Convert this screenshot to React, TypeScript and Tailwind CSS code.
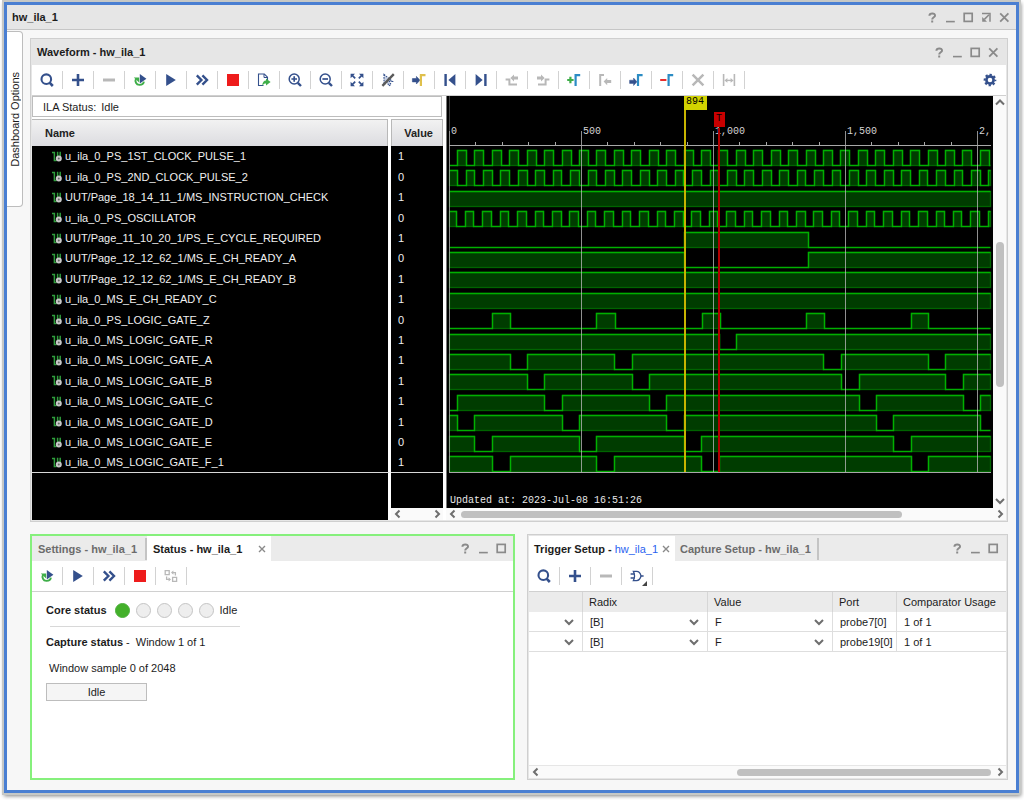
import React from "react";

const NAVY = "#34508c";
const GREY = "#b8b8b8";
const GREEN = "#3fae49";
const EDGE = "#2b8cc4";

type IconName =
  | "search" | "plus" | "minus" | "rerun" | "play" | "forward" | "stop" | "export"
  | "zoomIn" | "zoomOut" | "fit" | "noCursor" | "toCursor" | "first" | "last"
  | "prevEdge" | "nextEdge" | "addMarker" | "prevMarker" | "nextMarker" | "removeMarker"
  | "clear" | "measure" | "gear" | "gate" | "swap";

const edge = (x: number, color: string) => (
  <path d={`M${x} 14V3.2H${x + 4.6}`} fill="none" stroke={color} strokeWidth="2.2" />
);

const glass = (
  <>
    <circle cx="7.2" cy="7" r="5" fill="none" stroke={NAVY} strokeWidth="1.5" />
    <path d="M10.8 10.8L14 14" stroke={NAVY} strokeWidth="2.4" />
  </>
);

const icons: Record<IconName, React.ReactNode> = {
  search: (
    <>
      <circle cx="7.3" cy="7.2" r="4.8" fill="none" stroke={NAVY} strokeWidth="2.1" />
      <path d="M10.6 10.6L13.8 14" stroke={NAVY} strokeWidth="2.6" />
    </>
  ),
  plus: <path d="M8 2v12M2 8h12" stroke={NAVY} strokeWidth="2.6" />,
  minus: <path d="M2 8h12" stroke={GREY} strokeWidth="3" />,
  rerun: (
    <>
      <path d="M4 6.6C2.6 9.4 4.2 12.8 7.3 12.9C9.8 13 11.6 11.6 11.9 9.6" fill="none" stroke={GREEN} strokeWidth="1.9" />
      <path d="M1.8 5.4h5.4v5z" fill={GREEN} />
      <path d="M7.8 2L14.4 6.8L7.8 11.6z" fill={NAVY} />
    </>
  ),
  play: <path d="M3.2 2L12.8 8L3.2 14z" fill={NAVY} />,
  forward: <path d="M2.8 3.4L7.4 8L2.8 12.6M8.4 3.4L13 8L8.4 12.6" fill="none" stroke={NAVY} strokeWidth="2.4" />,
  stop: <rect x="2" y="2" width="12" height="12" fill="#ee1c1c" />,
  export: (
    <>
      <path d="M11.5 8V5.2L8.3 2H2.5v11.5h5" fill="none" stroke={NAVY} strokeWidth="1.1" />
      <path d="M8 2v3.5h3.5" fill="none" stroke={NAVY} strokeWidth="1" />
      <path d="M6.2 13.8C6.6 10.2 8 8.6 10 8.6V6.4L14.6 10L10 13.4V11.4C8.4 11.4 7.4 12 6.2 13.8z" fill={GREEN} />
    </>
  ),
  zoomIn: (
    <>
      {glass}
      <path d="M7.2 4.2v5.6M4.4 7H10" stroke={NAVY} strokeWidth="1.7" />
    </>
  ),
  zoomOut: (
    <>
      {glass}
      <path d="M4.4 7H10" stroke={NAVY} strokeWidth="1.7" />
    </>
  ),
  fit: (
    <g fill={NAVY} stroke={NAVY}>
      <path stroke="none" d="M1.6 1.8h4.4L1.6 6.2zM14.4 1.8H10L14.4 6.2zM1.6 14.2h4.4L1.6 9.8zM14.4 14.2H10L14.4 9.8z" />
      <path strokeWidth="1.7" d="M3 3.2L6.2 6.4M13 3.2L9.8 6.4M3 12.8L6.2 9.6M13 12.8L9.8 9.6" />
    </g>
  ),
  noCursor: (
    <>
      <path d="M4 2.5V12.5L7 10L9 13.8L11 12.6L9.4 9.4H12.4z" fill="#c9d2e4" stroke={NAVY} strokeWidth="1.1" strokeDasharray="1.6 1" />
      <path d="M2.4 13.8L13.8 2.2" stroke="#5a5a5a" strokeWidth="2.4" />
    </>
  ),
  toCursor: (
    <>
      <path d="M1.4 6.6h4V4.4L9 8.2L5.4 12V9.9h-4z" fill={NAVY} stroke={NAVY} strokeWidth="0.6" />
      {edge(9.9, "#dfc04c")}
    </>
  ),
  first: (
    <>
      <rect x="2.4" y="2" width="2.4" height="12" fill={NAVY} />
      <path d="M13.4 2v12L6.4 8z" fill={NAVY} />
    </>
  ),
  last: (
    <>
      <rect x="11.2" y="2" width="2.4" height="12" fill={NAVY} />
      <path d="M2.6 2v12L9.6 8z" fill={NAVY} />
    </>
  ),
  prevEdge: (
    <>
      <path d="M1.6 7.4h3.8v5.2h7.6" fill="none" stroke={GREY} strokeWidth="2" />
      <path d="M6.4 6L10 2.4V4.5h4V7.5h-4v2.1z" fill={GREY} />
    </>
  ),
  nextEdge: (
    <>
      <path d="M14.4 7.4h-3.8v5.2H3" fill="none" stroke={GREY} strokeWidth="2" />
      <path d="M9.6 6L6 2.4V4.5H2V7.5h4v2.1z" fill={GREY} />
    </>
  ),
  addMarker: (
    <>
      <path d="M4.4 4.8v6.4M1.2 8h6.4" stroke={GREEN} strokeWidth="2.2" />
      {edge(9.6, EDGE)}
    </>
  ),
  prevMarker: (
    <>
      <path d="M3.2 14V3H7" fill="none" stroke={GREY} strokeWidth="2" />
      <path d="M14.2 8.1h-4V6L6.6 9.6L10.2 13.2v-2.1h4z" fill={GREY} />
    </>
  ),
  nextMarker: (
    <>
      <path d="M1.6 8.2h4V6.1L9 9.8L5.6 13.5V11.4h-4z" fill={NAVY} stroke={NAVY} strokeWidth="0.5" />
      {edge(10, EDGE)}
    </>
  ),
  removeMarker: (
    <>
      <path d="M1.2 8h6.2" stroke="#e82c2c" strokeWidth="2" />
      {edge(9.6, EDGE)}
    </>
  ),
  clear: <path d="M2.6 2.6L13.4 13.4M13.4 2.6L2.6 13.4" stroke={GREY} strokeWidth="2.5" />,
  measure: (
    <>
      <path d="M2.6 2v12M13.4 2v12" stroke={GREY} strokeWidth="1.6" />
      <path d="M5 8.4h6" stroke={GREY} strokeWidth="1.4" />
      <path d="M3.4 8.4L6.4 6v4.8zM12.6 8.4L9.6 6v4.8z" fill={GREY} />
    </>
  ),
  gear: (
    <>
      <circle cx="8" cy="8" r="3.6" fill="none" stroke={NAVY} strokeWidth="2.6" />
      <circle cx="8" cy="8" r="5.4" fill="none" stroke={NAVY} strokeWidth="1.9" strokeDasharray="2.3 1.94" strokeDashoffset="1.15" />
    </>
  ),
  gate: (
    <>
      <path d="M4.4 3.4H7.6C10 3.4 11.4 5.4 12 8C11.4 10.6 10 12.6 7.6 12.6H4.4C5.8 9.8 5.8 6.2 4.4 3.4z" fill="none" stroke={NAVY} strokeWidth="1.3" />
      <path d="M1.6 6h4M1.6 10h4M12 8h2.6" stroke={NAVY} strokeWidth="1.3" />
      <path d="M18 13v5h-5z" fill="#444" />
    </>
  ),
  swap: (
    <>
      <path d="M2.2 2.6h4v4h-4zM9.6 9.4h4v4h-4z" fill="none" stroke={GREY} strokeWidth="1.3" />
      <path d="M9 4.6h3.4V7.4M7 11.4H3.6V8.6" fill="none" stroke={GREY} strokeWidth="1.3" />
      <path d="M8 4.6L10.4 2.4v4.4zM8 11.4L5.6 9.2v4.4z" fill={GREY} />
    </>
  ),
};

function Tool({ name, label }: { name: IconName; label: string }) {
  return (
    <button type="button" aria-label={label} className="flex h-[18px] w-[31px] items-center justify-center border-r border-[#d2d2d2]">
      <svg width="16" height="16" viewBox="0 0 16 16" className="overflow-visible">
        {icons[name]}
      </svg>
    </button>
  );
}

function Toolbar({ items, children }: { items: [IconName, string][]; children?: React.ReactNode }) {
  return (
    <div className="flex h-[31px] shrink-0 items-center border-b border-[#d0d0d0] bg-white">
      {items.map(([name, label]) => (
        <Tool key={label} name={name} label={label} />
      ))}
      {children}
    </div>
  );
}

const controls = {
  help: <path d="M2.4 3.8C2.6 0.6 8.4 0.8 8 3.8C7.8 5.2 5.2 5.4 5.2 7.4M5.2 8.6V10.4" fill="none" stroke="#8a8a8a" strokeWidth="2" />,
  minimize: <path d="M1 9.6h8.8" stroke="#8a8a8a" strokeWidth="1.6" />,
  maximize: <rect x="1.2" y="1.4" width="8" height="8" fill="none" stroke="#8a8a8a" strokeWidth="1.7" />,
  float: (
    <>
      <path d="M1 1.6h8v8.2" fill="none" stroke="#8a8a8a" strokeWidth="1.5" />
      <path d="M8 2.8L3.4 7.4" stroke="#8a8a8a" strokeWidth="1.5" />
      <path d="M1.2 5v4.8H6z" fill="#8a8a8a" />
    </>
  ),
  close: <path d="M1.2 1.4L9.4 9.6M9.4 1.4L1.2 9.6" stroke="#8a8a8a" strokeWidth="1.8" />,
};

function WindowControls({ names }: { names: (keyof typeof controls)[] }) {
  return (
    <div className="ml-auto flex gap-[7px]">
      {names.map((n) => (
        <button key={n} type="button" aria-label={n} className="size-[11px]">
          <svg width="11" height="11" viewBox="0 0 11 11">{controls[n]}</svg>
        </button>
      ))}
    </div>
  );
}

function Arrow({ dir }: { dir: "up" | "down" | "left" | "right" }) {
  const d = {
    up: "M1 6.5L5 2.5L9 6.5",
    down: "M1 3L5 7L9 3",
    left: "M6.5 1.5L3 5L6.5 8.5",
    right: "M3.5 1.5L7 5L3.5 8.5",
  }[dir];
  return (
    <svg width="10" height="10" viewBox="0 0 10 10" className="pointer-events-none">
      <path d={d} fill="none" stroke="#6e6e6e" strokeWidth="2" />
    </svg>
  );
}

function HScroll({ children }: { children?: React.ReactNode }) {
  return (
    <div className="flex h-3 items-center justify-between bg-[#fafafa] pr-px pl-[2px]">
      <button type="button" aria-label="Scroll left"><Arrow dir="left" /></button>
      {children}
      <button type="button" aria-label="Scroll right"><Arrow dir="right" /></button>
    </div>
  );
}

/* Each signal starts at `start` and toggles at every x in `edges` (plot pixels). */
type Signal = { name: string; value: number; start: 0 | 1; edges: number[] };

const PERIOD = 17.43;
const END = 541;
const clock = (firstEdge: number, phaseA: number, phaseB: number) => {
  const out: number[] = [];
  for (let x = firstEdge, i = 0; x < END; i++) {
    out.push(x);
    x += i % 2 === 0 ? phaseA : phaseB;
  }
  return out;
};

const signals: Signal[] = [
  { name: "u_ila_0_PS_1ST_CLOCK_PULSE_1", value: 1, start: 0, edges: clock(8, 9, PERIOD - 9) },
  { name: "u_ila_0_PS_2ND_CLOCK_PULSE_2", value: 0, start: 1, edges: clock(7.8, 8.7, PERIOD - 8.7) },
  { name: "UUT/Page_18_14_11_1/MS_INSTRUCTION_CHECK", value: 1, start: 1, edges: [] },
  { name: "u_ila_0_PS_OSCILLATOR", value: 0, start: 1, edges: clock(7, 8.9, PERIOD - 8.9) },
  { name: "UUT/Page_11_10_20_1/PS_E_CYCLE_REQUIRED", value: 1, start: 0, edges: [235, 359] },
  { name: "UUT/Page_12_12_62_1/MS_E_CH_READY_A", value: 0, start: 1, edges: [235, 359] },
  { name: "UUT/Page_12_12_62_1/MS_E_CH_READY_B", value: 1, start: 1, edges: [] },
  { name: "u_ila_0_MS_E_CH_READY_C", value: 1, start: 1, edges: [] },
  { name: "u_ila_0_PS_LOGIC_GATE_Z", value: 0, start: 0, edges: [43, 61, 147, 166, 253, 271, 357, 375, 462, 479] },
  { name: "u_ila_0_MS_LOGIC_GATE_R", value: 1, start: 1, edges: [270, 287] },
  { name: "u_ila_0_MS_LOGIC_GATE_A", value: 1, start: 1, edges: [61, 78, 165, 183, 374, 392, 479, 496] },
  { name: "u_ila_0_MS_LOGIC_GATE_B", value: 1, start: 1, edges: [78, 95, 183, 200, 392, 410, 496, 514] },
  { name: "u_ila_0_MS_LOGIC_GATE_C", value: 1, start: 0, edges: [8, 95, 113, 200, 217, 410, 427, 514, 531] },
  { name: "u_ila_0_MS_LOGIC_GATE_D", value: 1, start: 1, edges: [8, 25, 113, 130, 217, 235, 427, 444, 531] },
  { name: "u_ila_0_MS_LOGIC_GATE_E", value: 0, start: 1, edges: [25, 43, 130, 147, 235, 252, 444, 462] },
  { name: "u_ila_0_MS_LOGIC_GATE_F_1", value: 1, start: 1, edges: [43, 61, 147, 165, 252, 270, 462, 479] },
];

const X0 = 3;

function Trace({ signal, index }: { signal: Signal; index: number }) {
  const top = Math.round(54 + index * 20.4) + 0.5;
  const low = top + 15;
  let level = signal.start;
  let x = X0 + 0.5;
  let line = `M${x} ${level ? top : low}`;
  const fills: [number, number][] = [];
  for (const e of [...signal.edges, END]) {
    const nx = X0 + Math.round(e) + 0.5;
    line += `H${nx}`;
    if (level) fills.push([x, nx]);
    if (e !== END) {
      level = level ? 0 : 1;
      line += `V${level ? top : low}`;
    }
    x = nx;
  }
  return (
    <g>
      {fills.map(([a, b]) => (
        <rect key={a} x={a} y={top} width={b - a} height={15} fill="#003c00" stroke="#006400" strokeWidth="1.3" />
      ))}
      <path d={line} fill="none" stroke="#00b000" strokeWidth="1.4" />
    </g>
  );
}

const ticks = Array.from({ length: 21 }, (_, i) => i);

function WavePlot() {
  return (
    <svg width="547" height="412" className="block font-['Liberation_Mono',monospace] text-[10px]" role="img" aria-label="Captured waveforms">
      <rect width="1" height="412" fill="#777" />
      <path d="M3.5 0V35" stroke="#3c3c3c" />
      {signals.map((s, i) => (
        <Trace key={s.name} signal={s} index={i} />
      ))}
      {ticks.map((i) => {
        const x = X0 + Math.round(i * 26.4) + 0.5;
        return i % 5 === 0 ? (
          <path key={i} d={`M${x} 35V376`} stroke="#b4b4b4" strokeOpacity="0.8" />
        ) : (
          <path key={i} d={`M${x} 46V50`} stroke="#a8a8a8" />
        );
      })}
      <path d="M3 49.5H545M3 376.5H545" stroke="#a8a8a8" />
      <g fill="#d4d4d4">
        <text x="5" y="38">0</text>
        <text x="137" y="38">500</text>
        <text x="269" y="38">1,000</text>
        <text x="401" y="38">1,500</text>
        <text x="533" y="38">2,</text>
      </g>
      <path d="M273 32V376" stroke="#b40000" strokeWidth="2" />
      <rect x="268" y="16" width="11" height="15" fill="#c80000" />
      <text x="270" y="25" fill="#000">T</text>
      <path d="M239 0V376" stroke="#c8b400" strokeWidth="2" />
      <rect x="238" y="0" width="23" height="14" fill="#d2d200" />
      <text x="240" y="8" fill="#000">894</text>
      <text x="4" y="407" fill="#e8e8e8">Updated at: 2023-Jul-08 16:51:26</text>
    </svg>
  );
}

function ProbeIcon() {
  return (
    <svg width="10" height="11" viewBox="0 0 10 11" className="shrink-0">
      <path d="M0 1.4h2.8M2.4 0.8V9.6H4.6M5.6 5V0.8M8.2 0.8V5" fill="none" stroke="#2f9e3c" strokeWidth="1.5" />
      <circle cx="6.8" cy="7.4" r="2" fill="#666" stroke="#c8c8c8" strokeWidth="2" />
    </svg>
  );
}

function SignalTable() {
  return (
    <table className="mt-[2px] w-full table-fixed border-separate border-spacing-0 bg-black text-left text-[#f0f0f0]">
      <thead>
        <tr className="h-[27px] text-[#222]">
          <th className="border-r-[3px] border-white p-0">
            <div className="flex h-[27px] items-center border-t border-r border-[#b8b8b8] bg-linear-to-b from-[#f2f2f2] to-[#dcdce0] pl-[13px]">Name</div>
          </th>
          <th className="w-[52px] p-0">
            <div className="flex h-[27px] items-center justify-end border border-b-0 border-[#b8b8b8] bg-linear-to-b from-[#f2f2f2] to-[#dcdce0] pr-[9px]">Value</div>
          </th>
        </tr>
      </thead>
      <tbody>
        {signals.map((s, i) => (
          <tr key={s.name} className={i % 5 === 1 || i % 5 === 3 ? "h-[21px]" : "h-[20px]"}>
            <td className="border-r-[3px] border-white p-0">
              <div className="flex h-5 items-center gap-[3px] pl-[20px]">
                <ProbeIcon />
                {s.name}
              </div>
            </td>
            <td className="p-0 pl-[7px]">{s.value}</td>
          </tr>
        ))}
        <tr className="h-[36px]">
          <td rowSpan={2} className="border-t border-r-[3px] border-t-[#d8d8d8] border-r-white p-0" />
          <td className="border-t border-t-[#d8d8d8] p-0" />
        </tr>
        <tr className="h-3">
          <td className="p-0"><HScroll /></td>
        </tr>
      </tbody>
    </table>
  );
}

const waveTools: [IconName, string][] = [
  ["search", "Search"], ["plus", "Add probes"], ["minus", "Remove probes"], ["rerun", "Auto re-trigger"],
  ["play", "Run trigger"], ["forward", "Run immediate"], ["stop", "Stop trigger"], ["export", "Export data"],
  ["zoomIn", "Zoom in"], ["zoomOut", "Zoom out"], ["fit", "Zoom fit"], ["noCursor", "Toggle cursor"],
  ["toCursor", "Go to cursor"], ["first", "Go to start"], ["last", "Go to end"], ["prevEdge", "Previous transition"],
  ["nextEdge", "Next transition"], ["addMarker", "Add marker"], ["prevMarker", "Previous marker"],
  ["nextMarker", "Next marker"], ["removeMarker", "Remove marker"], ["clear", "Delete markers"], ["measure", "Measure"],
];

function WaveformPanel() {
  return (
    <section className="shrink-0 border border-[#cfcfcf] bg-[#e6e6e6] px-px pb-px">
      <header className="flex h-[26px] items-center pr-[7px] pl-[5px]">
        <h2 className="font-bold">Waveform - hw_ila_1</h2>
        <WindowControls names={["help", "minimize", "maximize", "close"]} />
      </header>
      <Toolbar items={waveTools}>
        <button type="button" aria-label="Settings" className="mr-2 ml-auto">
          <svg width="16" height="16" viewBox="0 0 16 16">{icons.gear}</svg>
        </button>
      </Toolbar>
      <div className="flex bg-white">
        <div className="w-[411px] shrink-0">
          <div className="mr-px flex h-[21px] items-center gap-[5px] border border-[#bdbdbd] pl-[10px]">
            <span>ILA Status:</span>
            <span>Idle</span>
          </div>
          <SignalTable />
        </div>
        <div className="ml-[3px] flex min-w-0 flex-1 flex-col">
          <div className="flex">
            <div className="min-w-0 flex-1 overflow-hidden bg-black">
              <WavePlot />
            </div>
            <div className="flex w-[13px] shrink-0 flex-col items-center bg-[#fafafa] py-[2px]">
              <button type="button" aria-label="Scroll up"><Arrow dir="up" /></button>
              <div className="w-2 flex-1 pt-[134px]">
                <div className="h-[145px] rounded-full bg-[#c0c0c0]" />
              </div>
              <button type="button" aria-label="Scroll down"><Arrow dir="down" /></button>
            </div>
          </div>
          <HScroll>
            <div className="mx-[3px] flex-1">
              <div className="h-[7px] w-[83%] rounded-full bg-[#c0c0c0]" />
            </div>
          </HScroll>
        </div>
      </div>
    </section>
  );
}

function TabClose({ label }: { label: string }) {
  return (
    <button type="button" aria-label={label}>
      <svg width="8" height="8" viewBox="0 0 8 8">
        <path d="M1 1L7 7M7 1L1 7" stroke="#8a8a8a" strokeWidth="1.4" />
      </svg>
    </button>
  );
}

function StatusPanel() {
  return (
    <section className="flex min-w-0 flex-col border-2 border-[#86f07c] bg-white">
      <header className="flex h-[25px] shrink-0 items-center bg-[#ebebeb] pr-[6px]">
        <button type="button" className="h-[22px] w-[115px] border-r-2 border-[#c4c4c4] pl-[6px] text-left font-bold text-[#6c6c6c]">Settings - hw_ila_1</button>
        <div className="flex h-[25px] w-[124px] items-center justify-between bg-white pr-[5px] pl-[6px]">
          <button type="button" className="font-bold">Status - hw_ila_1</button>
          <TabClose label="Close status" />
        </div>
        <WindowControls names={["help", "minimize", "maximize"]} />
      </header>
      <Toolbar
        items={[["rerun", "Auto re-trigger"], ["play", "Run trigger"], ["forward", "Run immediate"], ["stop", "Stop trigger"], ["swap", "Toggle view"]]}
      />
      <div className="px-[14px] pt-[9px]">
        <div className="flex h-[18px] items-center gap-[6px]">
          <span className="mr-[2px] font-bold">Core status</span>
          <span className="size-[15px] rounded-full border border-[#4db03c] bg-[#43b02a]" />
          {[1, 2, 3, 4].map((i) => (
            <span key={i} className="size-[15px] rounded-full border border-[#c4c4c4] bg-[#eeeeee]" />
          ))}
          <span>Idle</span>
        </div>
        <div className="mt-[7px] ml-1 h-px w-[190px] bg-[#d8d8d8]" />
        <div className="mt-[7px] flex h-4 items-center gap-[6px]">
          <span><b>Capture status</b> -</span>
          <span>Window 1 of 1</span>
        </div>
        <div className="mt-[10px] flex h-4 items-center pl-[3px]">Window sample 0 of 2048</div>
        <div className="mt-[7px] flex h-[18px] w-[101px] items-center justify-center border border-[#bdbdbd] bg-[#f5f5f5]" role="status">Idle</div>
      </div>
    </section>
  );
}

function CellSelect({ label, value }: { label: string; value: string }) {
  return (
    <div className="grid h-[19px] items-center">
      <select aria-label={label} defaultValue={value} className="col-start-1 row-start-1 h-[19px] w-full appearance-none bg-transparent pl-[7px] outline-none">
        <option>{value}</option>
      </select>
      <span className="pointer-events-none col-start-1 row-start-1 mr-[8px] justify-self-end">
        <Arrow dir="down" />
      </span>
    </div>
  );
}

function TriggerPanel() {
  const cell = "border-r border-b border-[#dedede] p-0 last:border-r-0";
  const head = "border-r border-[#d6d6d6] p-0 pl-[6px] font-normal last:border-r-0";
  return (
    <section className="flex min-w-0 flex-col border border-[#cfcfcf] bg-[#e6e6e6] p-px">
      <header className="flex h-[25px] shrink-0 items-center bg-[#ebebeb] pr-[7px]">
        <div className="flex h-[25px] w-[146px] items-center justify-between bg-white pr-[5px] pl-[5px]">
          <button type="button" className="font-bold">
            Trigger Setup - <span className="font-normal text-[#2a62f0]">hw_ila_1</span>
          </button>
          <TabClose label="Close trigger setup" />
        </div>
        <button type="button" className="h-[22px] w-[144px] border-r-2 border-[#c4c4c4] pl-[5px] text-left font-bold text-[#6c6c6c]">Capture Setup - hw_ila_1</button>
        <WindowControls names={["help", "minimize", "maximize"]} />
      </header>
      <Toolbar items={[["search", "Search"], ["plus", "Add probe"], ["minus", "Remove probe"], ["gate", "Trigger condition"]]} />
      <div className="min-h-0 flex-1 bg-white">
        <table className="w-full table-fixed border-separate border-spacing-0 text-left">
          <thead>
            <tr className="h-5 bg-[#ebebeb]">
              <th aria-label="Operator" className={`${head} w-[54px]`} />
              <th className={`${head} w-[125px]`}>Radix</th>
              <th className={`${head} w-[125px]`}>Value</th>
              <th className={`${head} w-[64px]`}>Port</th>
              <th className={`${head} whitespace-nowrap`}>Comparator Usage</th>
            </tr>
          </thead>
          <tbody>
            {["probe7[0]", "probe19[0]"].map((port) => (
              <tr key={port} className="h-5">
                <td className={cell}><CellSelect label={`Operator ${port}`} value="" /></td>
                <td className={cell}><CellSelect label={`Radix ${port}`} value="[B]" /></td>
                <td className={cell}><CellSelect label={`Value ${port}`} value="F" /></td>
                <td className={cell}><span className="pl-[7px]">{port}</span></td>
                <td className={cell}><span className="pl-[7px]">1 of 1</span></td>
              </tr>
            ))}
          </tbody>
        </table>
      </div>
      <div className="border-t border-[#e6e6e6]">
        <HScroll>
          <div className="mx-1 flex flex-1 justify-end">
            <div className="h-[7px] w-[57%] rounded-full bg-[#c0c0c0]" />
          </div>
        </HScroll>
      </div>
    </section>
  );
}

export default function App() {
  return (
    <div className="flex min-h-screen flex-col bg-white pt-[2px] pr-[5px] pb-[7px] pl-1 font-['Liberation_Sans',Arial,sans-serif] text-[11px] leading-[14px] text-[#1c1c1c]">
      <div className="flex flex-1 flex-col border-[3px] border-[#4a7fd2] bg-[#f7f7f7] shadow-[0_0_0_2px_#c6c8c6,1px_2px_4px_1px_#808080]">
        <header className="flex h-[25px] shrink-0 items-center border-b border-[#c6c6c6] bg-[#e6e6e6] pr-[6px] pl-[5px]">
          <h1 className="font-bold">hw_ila_1</h1>
          <WindowControls names={["help", "minimize", "maximize", "float", "close"]} />
        </header>
        <div className="flex flex-1">
          <div className="w-[23px] shrink-0 pt-px">
            <button type="button" className="flex h-[176px] w-4 items-center justify-center rounded-r border border-l-0 border-[#bdbdbd] bg-white">
              <span className="rotate-180 [writing-mode:vertical-rl]">Dashboard Options</span>
            </button>
          </div>
          <main className="flex min-w-0 flex-1 flex-col gap-3 pt-2 pr-2 pb-[10px]">
            <WaveformPanel />
            <div className="grid flex-1 grid-cols-[485fr_481fr] gap-3">
              <StatusPanel />
              <TriggerPanel />
            </div>
          </main>
        </div>
      </div>
    </div>
  );
}
